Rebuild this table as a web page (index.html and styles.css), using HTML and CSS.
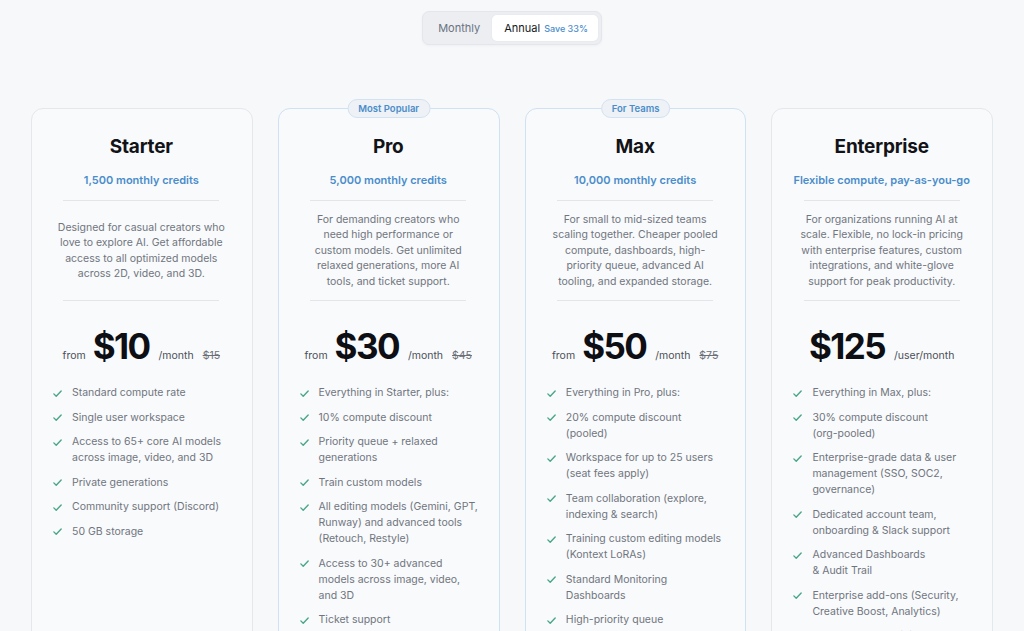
FILE: index.html
```html
<!DOCTYPE html>
<html lang="en">
<head>
<meta charset="utf-8">
<title>Pricing</title>
<link rel="stylesheet" href="styles.css">
</head>
<body>
<div class="page">
  <div class="toggle">
    <button class="toggle-btn">Monthly</button>
    <button class="toggle-btn active">Annual <span class="save">Save 33%</span></button>
  </div>

  <div class="plans">
    <!-- Starter -->
    <section class="card">
      <h2 class="title">Starter</h2>
      <div class="credits">1,500 monthly credits</div>
      <hr class="divider">
      <div class="desc"><p>Designed for casual creators who love to explore AI. Get affordable access to all optimized models across 2D, video, and 3D.</p></div>
      <hr class="divider">
      <div class="price"><span class="from">from</span><span class="amount">$10</span><span class="per">/month</span><span class="old">$15</span></div>
      <ul class="features">
        <li><svg class="check" viewBox="0 0 12 12"><path d="M2 6.4 4.6 9 10 3.2"/></svg><span>Standard compute rate</span></li>
        <li><svg class="check" viewBox="0 0 12 12"><path d="M2 6.4 4.6 9 10 3.2"/></svg><span>Single user workspace</span></li>
        <li><svg class="check" viewBox="0 0 12 12"><path d="M2 6.4 4.6 9 10 3.2"/></svg><span>Access to 65+ core AI models across image, video, and 3D</span></li>
        <li><svg class="check" viewBox="0 0 12 12"><path d="M2 6.4 4.6 9 10 3.2"/></svg><span>Private generations</span></li>
        <li><svg class="check" viewBox="0 0 12 12"><path d="M2 6.4 4.6 9 10 3.2"/></svg><span>Community support (Discord)</span></li>
        <li><svg class="check" viewBox="0 0 12 12"><path d="M2 6.4 4.6 9 10 3.2"/></svg><span>50 GB storage</span></li>
      </ul>
    </section>

    <!-- Pro -->
    <section class="card featured">
      <span class="badge">Most Popular</span>
      <h2 class="title">Pro</h2>
      <div class="credits">5,000 monthly credits</div>
      <hr class="divider">
      <div class="desc"><p>For demanding creators who need high performance or custom models. Get unlimited relaxed generations, more AI tools, and ticket support.</p></div>
      <hr class="divider">
      <div class="price"><span class="from">from</span><span class="amount">$30</span><span class="per">/month</span><span class="old">$45</span></div>
      <ul class="features">
        <li><svg class="check" viewBox="0 0 12 12"><path d="M2 6.4 4.6 9 10 3.2"/></svg><span>Everything in Starter, plus:</span></li>
        <li><svg class="check" viewBox="0 0 12 12"><path d="M2 6.4 4.6 9 10 3.2"/></svg><span>10% compute discount</span></li>
        <li><svg class="check" viewBox="0 0 12 12"><path d="M2 6.4 4.6 9 10 3.2"/></svg><span>Priority queue + relaxed generations</span></li>
        <li><svg class="check" viewBox="0 0 12 12"><path d="M2 6.4 4.6 9 10 3.2"/></svg><span>Train custom models</span></li>
        <li><svg class="check" viewBox="0 0 12 12"><path d="M2 6.4 4.6 9 10 3.2"/></svg><span><span class="nowrap">All editing models (Gemini, GPT,</span> Runway) and advanced tools (Retouch, Restyle)</span></li>
        <li><svg class="check" viewBox="0 0 12 12"><path d="M2 6.4 4.6 9 10 3.2"/></svg><span>Access to 30+ advanced models across image, video, and 3D</span></li>
        <li><svg class="check" viewBox="0 0 12 12"><path d="M2 6.4 4.6 9 10 3.2"/></svg><span>Ticket support</span></li>
      </ul>
    </section>

    <!-- Max -->
    <section class="card featured">
      <span class="badge">For Teams</span>
      <h2 class="title">Max</h2>
      <div class="credits">10,000 monthly credits</div>
      <hr class="divider">
      <div class="desc"><p>For small to mid-sized teams scaling together. Cheaper pooled compute, dashboards, high-priority queue, advanced AI tooling, and expanded storage.</p></div>
      <hr class="divider">
      <div class="price"><span class="from">from</span><span class="amount">$50</span><span class="per">/month</span><span class="old">$75</span></div>
      <ul class="features">
        <li><svg class="check" viewBox="0 0 12 12"><path d="M2 6.4 4.6 9 10 3.2"/></svg><span>Everything in Pro, plus:</span></li>
        <li><svg class="check" viewBox="0 0 12 12"><path d="M2 6.4 4.6 9 10 3.2"/></svg><span>20% compute discount (pooled)</span></li>
        <li><svg class="check" viewBox="0 0 12 12"><path d="M2 6.4 4.6 9 10 3.2"/></svg><span>Workspace for up to 25 users (seat fees apply)</span></li>
        <li><svg class="check" viewBox="0 0 12 12"><path d="M2 6.4 4.6 9 10 3.2"/></svg><span>Team collaboration (explore, indexing &amp; search)</span></li>
        <li><svg class="check" viewBox="0 0 12 12"><path d="M2 6.4 4.6 9 10 3.2"/></svg><span>Training custom editing models (Kontext LoRAs)</span></li>
        <li><svg class="check" viewBox="0 0 12 12"><path d="M2 6.4 4.6 9 10 3.2"/></svg><span>Standard Monitoring Dashboards</span></li>
        <li><svg class="check" viewBox="0 0 12 12"><path d="M2 6.4 4.6 9 10 3.2"/></svg><span>High-priority queue</span></li>
      </ul>
    </section>

    <!-- Enterprise -->
    <section class="card">
      <h2 class="title">Enterprise</h2>
      <div class="credits">Flexible compute, pay-as-you-go</div>
      <hr class="divider">
      <div class="desc"><p>For organizations running AI at scale. Flexible, no lock-in pricing with enterprise features, custom integrations, and white-glove support for peak productivity.</p></div>
      <hr class="divider">
      <div class="price"><span class="amount">$125</span><span class="per">/user/month</span></div>
      <ul class="features">
        <li><svg class="check" viewBox="0 0 12 12"><path d="M2 6.4 4.6 9 10 3.2"/></svg><span>Everything in Max, plus:</span></li>
        <li><svg class="check" viewBox="0 0 12 12"><path d="M2 6.4 4.6 9 10 3.2"/></svg><span>30% compute discount <span class="nowrap">(org-pooled)</span></span></li>
        <li><svg class="check" viewBox="0 0 12 12"><path d="M2 6.4 4.6 9 10 3.2"/></svg><span>Enterprise-grade data &amp; user management (SSO, SOC2, governance)</span></li>
        <li><svg class="check" viewBox="0 0 12 12"><path d="M2 6.4 4.6 9 10 3.2"/></svg><span>Dedicated account team, onboarding &amp; Slack support</span></li>
        <li><svg class="check" viewBox="0 0 12 12"><path d="M2 6.4 4.6 9 10 3.2"/></svg><span>Advanced Dashboards<br>&amp; Audit Trail</span></li>
        <li><svg class="check" viewBox="0 0 12 12"><path d="M2 6.4 4.6 9 10 3.2"/></svg><span>Enterprise add-ons (Security, Creative Boost, Analytics)</span></li>
        <li><svg class="check" viewBox="0 0 12 12"><path d="M2 6.4 4.6 9 10 3.2"/></svg><span>Custom model training</span></li>
      </ul>
    </section>
  </div>
</div>
</body>
</html>
```

FILE: styles.css
```css
* { box-sizing: border-box; }

html, body {
  margin: 0;
  padding: 0;
  background: #f7f8fa;
  font-family: Inter, "Noto Sans", "Liberation Sans", sans-serif;
  color: #111318;
}

.page {
  width: 962px;
  margin: 0 auto;
  padding-top: 11px;
  display: flex;
  flex-direction: column;
  align-items: center;
}

/* Billing toggle */
.toggle {
  display: flex;
  align-items: stretch;
  height: 34px;
  padding: 3px;
  background: #eceef2;
  border: 1px solid #e3e6eb;
  border-radius: 7px;
  box-shadow: 0 1px 3px rgba(20, 30, 50, 0.04);
}

.toggle-btn {
  font: inherit;
  border: 0;
  background: transparent;
  color: #6b7280;
  font-size: 11px;
  padding: 0 12px 0 12px;
  border-radius: 5px;
  cursor: pointer;
  display: flex;
  align-items: center;
  gap: 4px;
}

.toggle-btn.active {
  background: #ffffff;
  color: #15171c;
  padding: 0 10px 0 12px;
  box-shadow: 0 0 0 1px #e8ebf0;
}

.save {
  color: #4a8dcb;
  font-size: 9px;
  font-weight: 500;
}

/* Plans */
.plans {
  margin-top: 63px;
  width: 962px;
  display: grid;
  grid-template-columns: repeat(4, 1fr);
  gap: 25px;
}

.card {
  position: relative;
  background: #f9fafb;
  border: 1px solid #e4e7ec;
  border-radius: 12px;
  padding: 26px 21px 40px 20px;
  display: flex;
  flex-direction: column;
  align-items: center;
}

.card.featured {
  border-color: #cfe1f3;
}

.badge {
  position: absolute;
  top: -10px;
  left: 50%;
  transform: translateX(-50%);
  background: #eef1f5;
  border: 1px solid #d3e2f1;
  border-radius: 10px;
  color: #4a8dcb;
  font-size: 9.5px;
  font-weight: 600;
  line-height: 17px;
  padding: 0 10px;
  white-space: nowrap;
}

.title {
  margin: 0;
  font-size: 19px;
  line-height: 24px;
  font-weight: 700;
  letter-spacing: -0.2px;
  color: #111318;
}

.credits {
  margin-top: 13px;
  font-size: 11px;
  line-height: 16px;
  font-weight: 600;
  color: #4a8dcb;
  white-space: nowrap;
}

.divider {
  width: 156px;
  margin: 12px 0 0;
  border: 0;
  border-top: 1px solid #e2e5ea;
}

.desc {
  margin-top: 8px;
  height: 83px;
  width: 168px;
  display: flex;
  align-items: center;
  justify-content: center;
}

.desc p {
  margin: 0;
  font-size: 10.5px;
  line-height: 15.5px;
  color: #6f7580;
  text-align: center;
}

.desc + .divider {
  margin-top: 8px;
}

.price {
  margin-top: 24px;
  height: 44px;
  display: flex;
  align-items: baseline;
  justify-content: center;
  white-space: nowrap;
}

.from {
  font-size: 10.5px;
  color: #4b5059;
  margin-right: 7px;
}

.amount {
  font-size: 35px;
  font-weight: 700;
  letter-spacing: -1.6px;
  color: #0d0f14;
  margin-right: 9px;
}

.per {
  font-size: 10.5px;
  color: #4b5059;
}

.old {
  font-size: 10.5px;
  color: #6b7078;
  text-decoration: line-through;
  margin-left: 9px;
}

.features {
  list-style: none;
  margin: 16px 0 0;
  padding: 0;
  align-self: stretch;
  display: flex;
  flex-direction: column;
  gap: 8.5px;
}

.features li {
  display: flex;
  align-items: flex-start;
  gap: 9px;
  font-size: 10.5px;
  line-height: 16px;
  color: #6f7580;
}

.nowrap {
  white-space: nowrap;
}

.check {
  flex: none;
  width: 11px;
  height: 11px;
  margin-top: 2.5px;
  fill: none;
  stroke: #4aa68a;
  stroke-width: 1.5;
  stroke-linecap: round;
  stroke-linejoin: round;
}
```
